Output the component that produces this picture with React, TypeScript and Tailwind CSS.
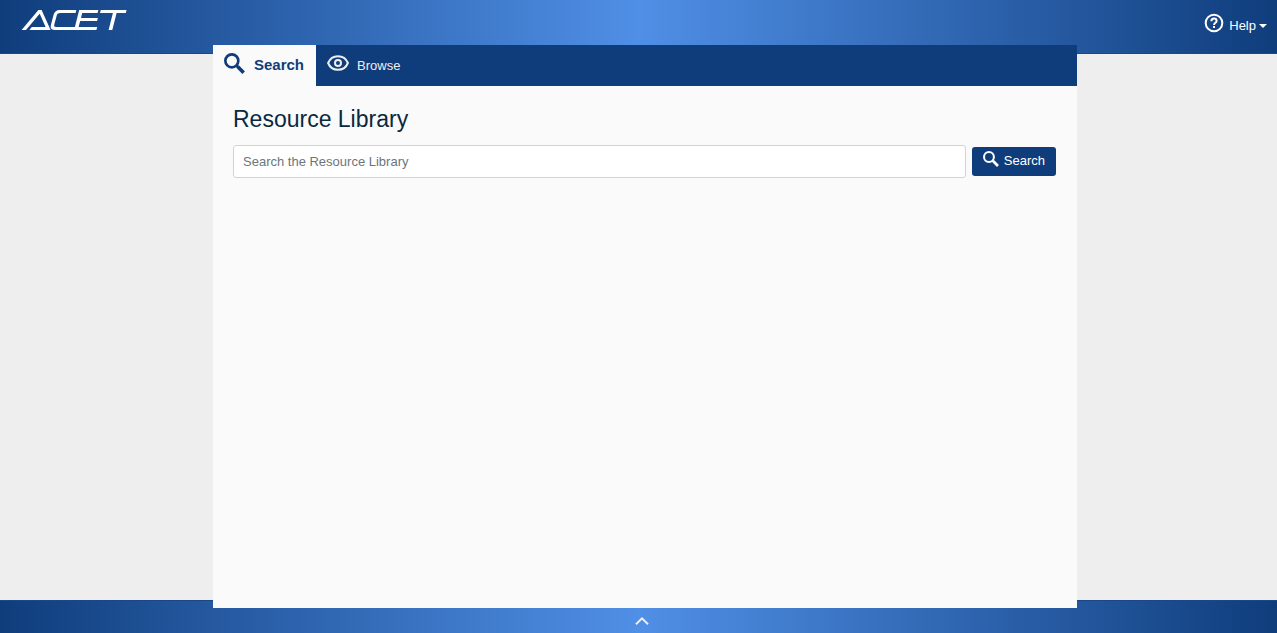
import React, { useState } from "react";

function SearchIcon({ className }: { className: string }) {
  return (
    <svg viewBox="0 0 22 22" className={className} fill="none" stroke="currentColor" aria-hidden="true">
      <circle cx="8.2" cy="8.2" r="6.8" strokeWidth="2.8" />
      <path d="M13 13l1.6 1.6" strokeWidth="2.8" />
      <path d="M14.2 14.2l6.4 6.4" strokeWidth="3.8" />
    </svg>
  );
}

function EyeIcon({ className }: { className: string }) {
  return (
    <svg viewBox="0 0 22 16" className={className} fill="none" stroke="currentColor" strokeWidth="2" aria-hidden="true">
      <path d="M1.1 8C2.8 3.8 6.6 1.2 11 1.2S19.2 3.8 20.9 8C19.2 12.2 15.4 14.8 11 14.8S2.8 12.2 1.1 8z" />
      <circle cx="11" cy="8" r="3" />
    </svg>
  );
}

function HelpIcon({ className }: { className: string }) {
  return (
    <svg viewBox="0 0 20 20" className={className} fill="none" stroke="currentColor" strokeWidth="2" aria-hidden="true">
      <circle cx="10" cy="10" r="8.3" />
      <path d="M7.4 8.2c0-1.6 1.1-2.7 2.6-2.7s2.6 1 2.6 2.4c0 1.9-2.6 2-2.6 4.1" />
      <path d="M10 13.1v2" />
    </svg>
  );
}

function AcetLogo() {
  return (
    <svg viewBox="0 0 106 22" className="h-[22px] w-[106px]" fill="currentColor" role="img" aria-label="ACET">
      <path d="M0.6 21L17.4 1H20.6L29.6 21H8.4L10.8 18H24.6L18.7 4.8L5 21z" />
      <path d="M55.4 1L54.6 4H39.5C36.9 4 36.2 4.8 35.6 7L33.3 15.6C32.9 17.4 33.4 18 35.2 18H53.9L58.2 1H77.4L76.6 4H61.2L60 9H76.9L76.1 12H59.2L57.6 18H76.2L75.4 21H33.4C30 21 29.1 19.1 30 15.6L32.2 7.2C33.3 2.8 35.2 1 39.4 1z" />
      <path d="M79.8 1H105.6L104.8 4H95.6L91.3 21H87.6L91.9 4H79z" />
    </svg>
  );
}

export default function App() {
  const [tab, setTab] = useState("search");
  const [query, setQuery] = useState("");

  return (
    <div className="flex min-h-screen flex-col bg-[#eeeeee] font-['Liberation_Sans',Arial,sans-serif] text-[13px] leading-5">
      <header className="flex h-[54px] items-start justify-between border-b border-[#1b4789] bg-[linear-gradient(90deg,#0f3d7c,#508fe6_50%,#0f3d7c)] pt-[9px] pr-2.5 pl-[21px] text-white">
        <a href="#home">
          <AcetLogo />
        </a>
        <button type="button" className="mt-1 flex items-start">
          <HelpIcon className="mr-[5px] size-5" />
          <span className="mt-[3px]">Help</span>
          <svg viewBox="0 0 8 4" className="mt-[11px] ml-[3px] h-1 w-2" fill="currentColor" aria-hidden="true">
            <path d="M0 0h8L4 4z" />
          </svg>
        </button>
      </header>

      <main className="z-10 -mt-[9px] mr-[200px] -mb-2 ml-[213px] flex-1 bg-[#fafafa]">
        <nav className="flex h-[41px] bg-[#0f3d7c]">
          <button
            type="button"
            aria-pressed={tab === "search"}
            onClick={() => setTab("search")}
            className="flex items-start bg-[#fafafa] px-[11px] pt-2 text-[15px] font-bold text-[#0f3d7c]"
          >
            <SearchIcon className="mr-[9px] size-[21px]" />
            <span className="mt-0.5 pr-px">Search</span>
          </button>
          <button
            type="button"
            aria-pressed={tab === "browse"}
            onClick={() => setTab("browse")}
            className="flex items-start px-[11px] pt-2.5 text-[#eeeeee]"
          >
            <EyeIcon className="mr-2 h-4 w-[22px]" />
            <span className="mt-px">Browse</span>
          </button>
        </nav>

        <section className="pt-[18px] pr-[21px] pl-5">
          <h1 className="text-[23px] leading-[30px] text-[#092940]">Resource Library</h1>
          <form className="mt-[11px] flex items-center gap-1.5" onSubmit={(e) => e.preventDefault()}>
            <input
              type="text"
              aria-label="Search the Resource Library"
              placeholder="Search the Resource Library"
              value={query}
              onChange={(e) => setQuery(e.target.value)}
              className="h-[33px] min-w-0 flex-1 rounded-[3px] border border-[#ced4da] bg-white px-[9px] text-[#092940] placeholder:text-[#6c757d]"
            />
            <button type="submit" className="flex h-[29px] items-start rounded-[3px] bg-[#0f3d7c] px-[11px] pt-1 text-white">
              <SearchIcon className="mr-[5px] size-4" />
              <span>Search</span>
            </button>
          </form>
        </section>
      </main>

      <footer className="flex h-[33px] items-center justify-center border-t border-[#1b4789] bg-[linear-gradient(90deg,#0f3d7c,#508fe6_50%,#0f3d7c)] pt-2 pl-1.5 text-[#eeeeee]">
        <button type="button" aria-label="Expand footer">
          <svg viewBox="0 0 14 8" className="h-2 w-3.5" fill="none" stroke="currentColor" strokeWidth="2" aria-hidden="true">
            <path d="M1 7.2L7 1.4L13 7.2" />
          </svg>
        </button>
      </footer>
    </div>
  );
}
